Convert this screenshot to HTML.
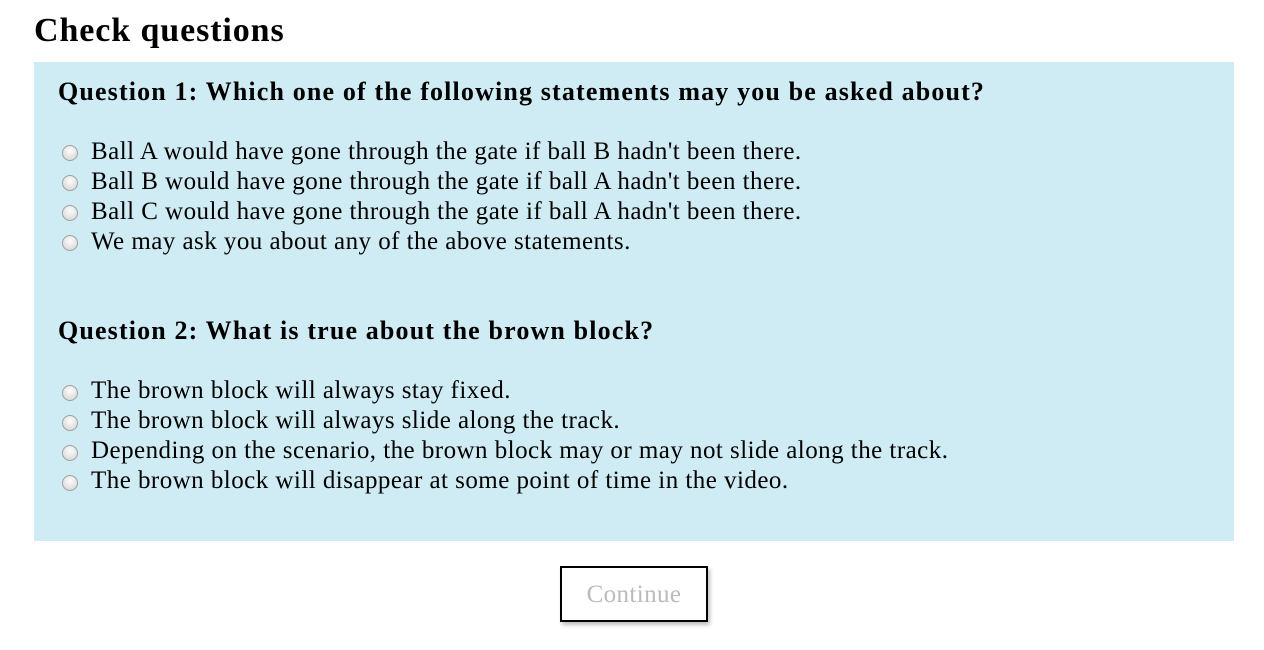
<!DOCTYPE html>
<html><head><style>
body{margin:0;background:#fff;font-family:"Liberation Serif",serif;color:#000;}
h1{position:absolute;left:34px;top:11px;margin:0;font-size:34px;font-weight:bold;line-height:40px;letter-spacing:0.9px}
.box{position:absolute;left:34px;top:62px;width:1200px;height:479px;background:#cfebf3}
.q{position:absolute;left:24px;font-weight:bold;font-size:26px;line-height:30px;letter-spacing:1.15px;white-space:nowrap}
.o{position:absolute;left:57px;font-size:25px;line-height:30px;letter-spacing:0.46px;white-space:nowrap}
.r{position:absolute;left:28px;width:14px;height:14px;border-radius:50%;border:1px solid #a0a0a0;background:radial-gradient(circle at 50% 35%,#fdfdfd,#d0d0d0)}
.btn{position:absolute;left:560px;top:566px;width:144px;height:52px;border:2px solid #000;box-shadow:2px 3px 4px rgba(0,0,0,.25);text-align:center;line-height:54px;font-size:25px;color:#bbb;letter-spacing:0.4px}
</style></head><body>
<h1>Check questions</h1>
<div class="box">
<div class="q" style="top:15px">Question 1: Which one of the following statements may you be asked about?</div>
<div class="r" style="top:83px"></div><div class="o" style="top:75px">Ball A would have gone through the gate if ball B hadn't been there.</div>
<div class="r" style="top:113px"></div><div class="o" style="top:105px">Ball B would have gone through the gate if ball A hadn't been there.</div>
<div class="r" style="top:143px"></div><div class="o" style="top:135px">Ball C would have gone through the gate if ball A hadn't been there.</div>
<div class="r" style="top:173px"></div><div class="o" style="top:165px">We may ask you about any of the above statements.</div>
<div class="q" style="top:254px">Question 2: What is true about the brown block?</div>
<div class="r" style="top:323px"></div><div class="o" style="top:314px">The brown block will always stay fixed.</div>
<div class="r" style="top:353px"></div><div class="o" style="top:344px">The brown block will always slide along the track.</div>
<div class="r" style="top:383px"></div><div class="o" style="top:374px">Depending on the scenario, the brown block may or may not slide along the track.</div>
<div class="r" style="top:413px"></div><div class="o" style="top:404px">The brown block will disappear at some point of time in the video.</div>
</div>
<div class="btn">Continue</div>
</body></html>
